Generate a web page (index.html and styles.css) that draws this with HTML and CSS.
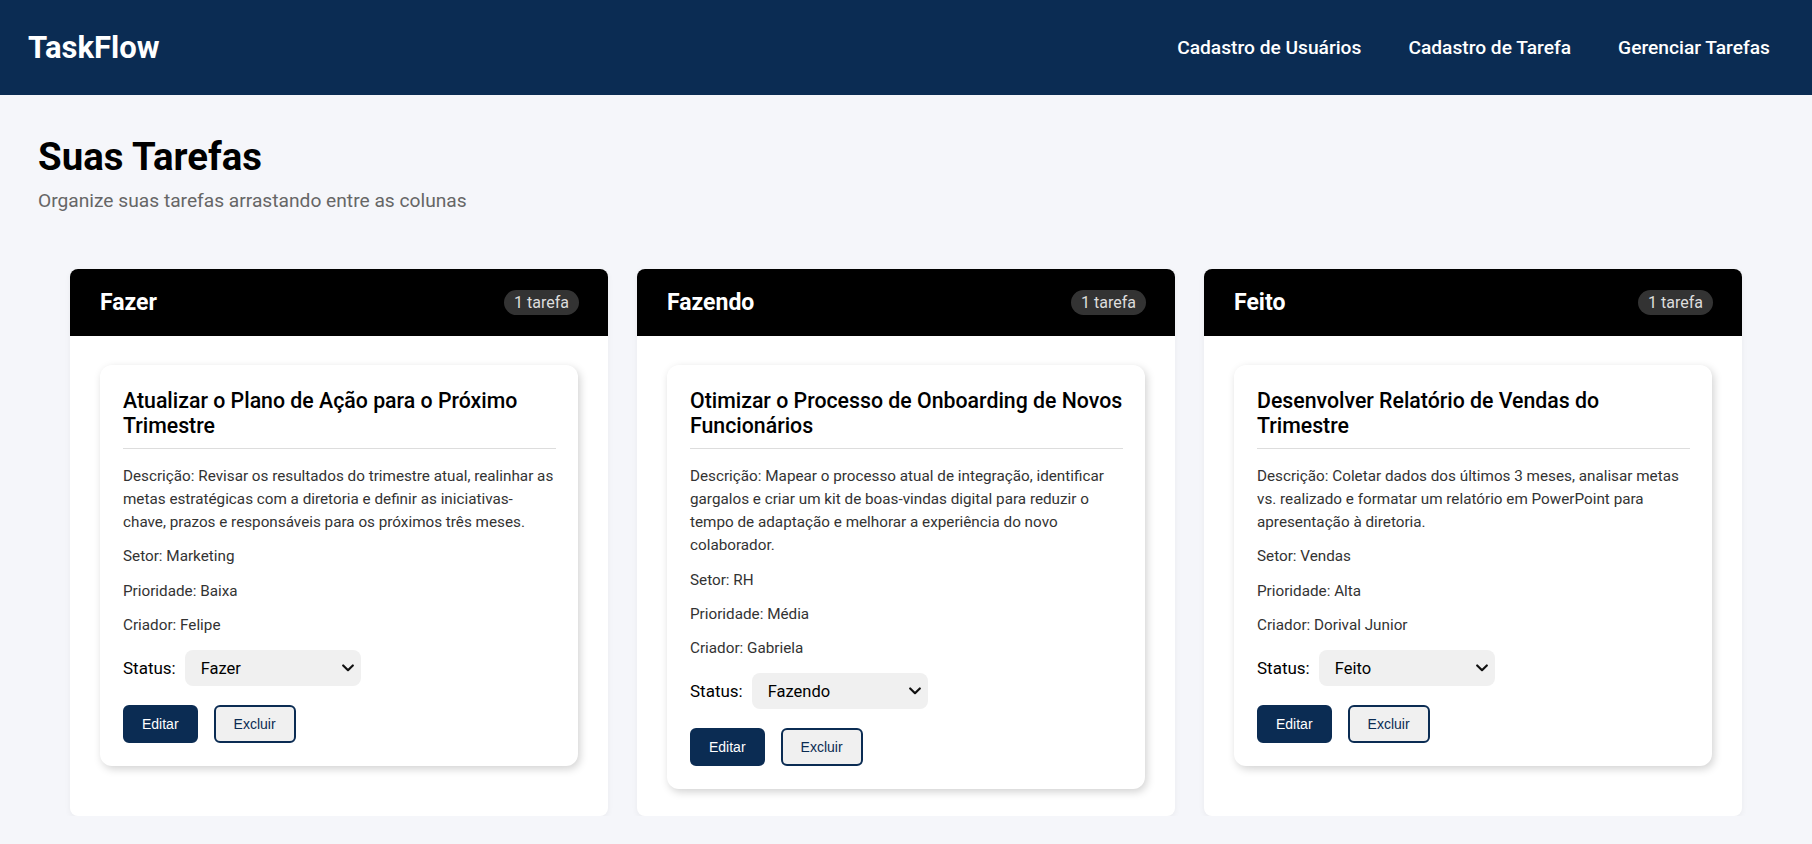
FILE: index.html
```html
<!DOCTYPE html>
<html lang="pt-BR">
<head>
<meta charset="utf-8">
<title>TaskFlow</title>
<link rel="stylesheet" href="styles.css">
</head>
<body>
<header class="topbar">
  <div class="logo">TaskFlow</div>
  <nav class="nav">
    <a href="#">Cadastro de Usuários</a>
    <a href="#">Cadastro de Tarefa</a>
    <a href="#">Gerenciar Tarefas</a>
  </nav>
</header>
<main class="page">
  <h1 class="page-title">Suas Tarefas</h1>
  <p class="page-sub">Organize suas tarefas arrastando entre as colunas</p>
  <section class="board">
    <div class="column">
      <div class="col-head"><h2>Fazer</h2><span class="badge">1 tarefa</span></div>
      <div class="col-body">
        <article class="card">
          <h3 class="card-title">Atualizar o Plano de Ação para o Próximo Trimestre</h3>
          <p>Descrição: Revisar os resultados do trimestre atual, realinhar as metas estratégicas com a diretoria e definir as iniciativas-<br>chave, prazos e responsáveis para os próximos três meses.</p>
          <p>Setor: Marketing</p>
          <p>Prioridade: Baixa</p>
          <p>Criador: Felipe</p>
          <div class="status"><label>Status:</label><span class="select-wrap"><select><option selected>Fazer</option><option>Fazendo</option><option>Feito</option></select><svg class="chev" viewBox="0 0 12 8" width="12" height="8"><path d="M1.2 1.5 L6 6.2 L10.8 1.5" fill="none" stroke="#111" stroke-width="2.2" stroke-linecap="round" stroke-linejoin="round"/></svg></span></div>
          <div class="actions"><button class="btn btn-edit">Editar</button><button class="btn btn-del">Excluir</button></div>
        </article>
      </div>
    </div>
    <div class="column">
      <div class="col-head"><h2>Fazendo</h2><span class="badge">1 tarefa</span></div>
      <div class="col-body">
        <article class="card">
          <h3 class="card-title">Otimizar o Processo de Onboarding de Novos Funcionários</h3>
          <p>Descrição: Mapear o processo atual de integração, identificar gargalos e criar um kit de boas-vindas digital para reduzir o tempo de adaptação e melhorar a experiência do novo colaborador.</p>
          <p>Setor: RH</p>
          <p>Prioridade: Média</p>
          <p>Criador: Gabriela</p>
          <div class="status"><label>Status:</label><span class="select-wrap"><select><option>Fazer</option><option selected>Fazendo</option><option>Feito</option></select><svg class="chev" viewBox="0 0 12 8" width="12" height="8"><path d="M1.2 1.5 L6 6.2 L10.8 1.5" fill="none" stroke="#111" stroke-width="2.2" stroke-linecap="round" stroke-linejoin="round"/></svg></span></div>
          <div class="actions"><button class="btn btn-edit">Editar</button><button class="btn btn-del">Excluir</button></div>
        </article>
      </div>
    </div>
    <div class="column">
      <div class="col-head"><h2>Feito</h2><span class="badge">1 tarefa</span></div>
      <div class="col-body">
        <article class="card">
          <h3 class="card-title">Desenvolver Relatório de Vendas do Trimestre</h3>
          <p>Descrição: Coletar dados dos últimos 3 meses, analisar metas vs. realizado e formatar um relatório em PowerPoint para apresentação à diretoria.</p>
          <p>Setor: Vendas</p>
          <p>Prioridade: Alta</p>
          <p>Criador: Dorival Junior</p>
          <div class="status"><label>Status:</label><span class="select-wrap"><select><option>Fazer</option><option>Fazendo</option><option selected>Feito</option></select><svg class="chev" viewBox="0 0 12 8" width="12" height="8"><path d="M1.2 1.5 L6 6.2 L10.8 1.5" fill="none" stroke="#111" stroke-width="2.2" stroke-linecap="round" stroke-linejoin="round"/></svg></span></div>
          <div class="actions"><button class="btn btn-edit">Editar</button><button class="btn btn-del">Excluir</button></div>
        </article>
      </div>
    </div>
  </section>
</main>
</body>
</html>
```
FILE: styles.css
```css
* { box-sizing: border-box; }
html, body { margin: 0; padding: 0; }
body {
  font-family: Roboto, "Noto Sans", sans-serif;
  background: #f5f6fa;
  color: #000;
}
.topbar {
  height: 95px;
  background: #0b2c53;
  display: flex;
  align-items: center;
  justify-content: space-between;
  padding: 0 42px 0 28px;
}
.logo {
  color: #fff;
  font-size: 31px;
  font-weight: 700;
}
.nav { display: flex; gap: 47px; }
.nav a {
  color: #fff;
  text-decoration: none;
  font-size: 19.2px;
  font-weight: 500;
}
.page { padding: 39px 38px 0; }
.page-title {
  margin: 0;
  font-size: 38.4px;
  line-height: 46px;
  font-weight: 700;
}
.page-sub {
  margin: 7px 0 0;
  font-size: 19.2px;
  line-height: 28px;
  color: #666;
}
.board {
  margin-top: 54px;
  padding: 0 32px;
  display: grid;
  grid-template-columns: repeat(3, 1fr);
  gap: 29px;
}
.column {
  background: #fff;
  border-radius: 8px;
  overflow: hidden;
  box-shadow: 0 2px 6px rgba(0,0,0,0.05);
}
.col-head {
  background: #000;
  height: 67px;
  padding: 0 29px 0 30px;
  display: flex;
  align-items: center;
  justify-content: space-between;
}
.col-head h2 {
  margin: 0;
  color: #fff;
  font-size: 23px;
  font-weight: 700;
}
.badge {
  background: #333;
  color: #ddd;
  font-size: 16px;
  height: 25px;
  line-height: 25px;
  padding: 0 10px;
  border-radius: 13px;
}
.col-body { padding: 29px 30px 27px; }
.card {
  background: #fff;
  border-radius: 12px;
  box-shadow: 2px 3px 8px rgba(0,0,0,0.18);
  padding: 23px 22px 23px 23px;
}
.card-title {
  margin: 0 0 16px;
  padding-bottom: 9px;
  border-bottom: 1px solid #ddd;
  font-size: 21.3px;
  line-height: 25.4px;
  font-weight: 500;
}
.card p {
  margin: 11px 0;
  font-size: 15.25px;
  line-height: 23.2px;
  color: #333;
}
.status {
  display: flex;
  align-items: center;
  gap: 9px;
  margin-top: 13px;
}
.status label { font-size: 17px; color: #000; }
.select-wrap { position: relative; display: inline-block; }
.select-wrap select {
  appearance: none;
  -webkit-appearance: none;
  display: block;
  width: 176px;
  height: 36px;
  background: #f0f0f0;
  border: none;
  border-radius: 8px;
  padding: 0 28px 0 16px;
  font-family: Roboto, sans-serif;
  font-size: 16.5px;
  color: #000;
}
.chev {
  position: absolute;
  right: 7px;
  top: 14px;
  pointer-events: none;
}
.actions { display: flex; gap: 16px; margin-top: 19px; }
.btn {
  font-family: "Liberation Sans", Arial, sans-serif;
  font-size: 14px;
  line-height: 16px;
  padding: 9px 16px;
  border: 2px solid #0b2c53;
  border-radius: 6px;
}
.btn-edit { background: #0b2c53; color: #fff; padding: 9px 17px; }
.btn-del { background: #f0f0f0; color: #0b2c53; padding: 9px 18px; }
```
